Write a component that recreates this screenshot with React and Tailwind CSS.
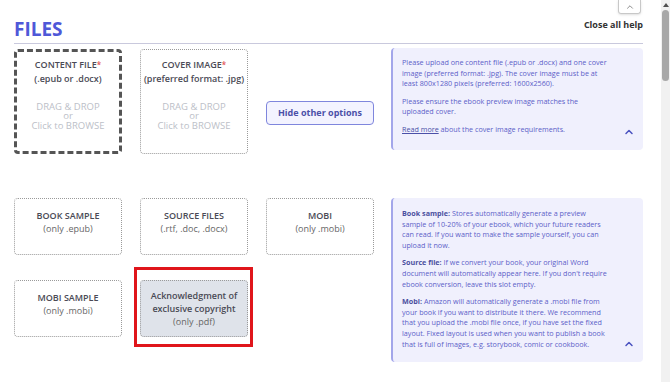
import { ChevronUp } from "lucide-react";

const font = { fontFamily: '"Open Sans", "DejaVu Sans", sans-serif' };

const UploadBox = ({ title, sub, required, drop, thick, filled, lines }) => (
  <div
    className={`w-[108px] flex flex-col items-center text-center rounded-[4px] ${
      thick ? "border-[3px] border-dashed border-[#555]" : "border border-dotted border-[#9a9a9a]"
    } ${filled ? "bg-[#dfe3ea]" : "bg-white"} ${drop ? "h-[105px]" : "h-[57px]"} ${
      thick ? "pt-[6px]" : drop ? "pt-[8px]" : lines ? "pt-[8px]" : "pt-[10px]"
    }`}
  >
    {lines ? (
      <div className="text-[9px] leading-[13px] font-semibold text-[#4a4a55]">
        {lines.map((l) => (
          <div key={l}>{l}</div>
        ))}
      </div>
    ) : (
      <div className="text-[9px] leading-[13px] font-semibold text-[#4a4a55]">
        {title}
        {required && <span className="text-[#e25555] align-top text-[8px]">*</span>}
      </div>
    )}
    <div className={`text-[9px] leading-[13px] ${drop ? "font-semibold text-[#4a4a55] mt-[1px]" : "text-[#666]"}`}>
      {sub}
    </div>
    {drop && (
      <div className="mt-[17px] text-[9.5px] leading-[9px] text-[#bcc0c8]">
        <div>DRAG &amp; DROP</div>
        <div>or</div>
        <div className="mt-[1px]">Click to BROWSE</div>
      </div>
    )}
  </div>
);

const HelpPanel = ({ className, children }) => (
  <div
    className={`w-[252px] ml-[17px] bg-[#f0f0fd] border-l-2 border-[#a3a6ea] rounded-[4px] pl-[9px] pr-[10px] relative text-[7.2px] leading-[10.6px] text-[#5c60c8] ${className}`}
  >
    {children}
    <ChevronUp className="absolute right-[8px] bottom-[12px] w-[12px] h-[12px] text-[#4a52c0]" strokeWidth={3} />
  </div>
);

export default function App() {
  return (
    <div className="flex w-[670px] h-[382px] bg-white overflow-hidden" style={font}>
      <div className="w-[661px] pl-[14px] pr-[18px]">
        <div className="flex justify-end pr-[2px]">
          <div className="w-[23px] h-[14px] border border-t-0 border-[#c8c8c8] rounded-b-[3px] shadow-sm flex items-center justify-center">
            <ChevronUp className="w-[10px] h-[10px] text-[#777]" strokeWidth={2} />
          </div>
        </div>
        <div className="h-[30px] flex justify-between items-end border-b border-[#c9c9dd]">
          <div className="text-[19px] leading-[22px] font-bold text-[#4f58d8] pb-[3px]">FILES</div>
          <div className="text-[9px] leading-[14px] font-bold text-[#333] pb-[11px]">Close all help</div>
        </div>

        <div className="flex mt-[4px]">
          <div className="flex gap-[18px] items-start pt-[1px]">
            <UploadBox title="CONTENT FILE" sub="(.epub or .docx)" required drop thick />
            <UploadBox title="COVER IMAGE" sub="(preferred format: .jpg)" required drop />
            <div className="w-[108px] h-[105px] flex items-center pt-[23px]">
              <button className="w-[108px] h-[24px] rounded-[4px] border-[1.5px] border-[#7f86dd] bg-[#f3f3ff] text-[9px] font-bold text-[#4b50a8]">
                Hide other options
              </button>
            </div>
          </div>
          <HelpPanel className="h-[102px] pt-[9px]">
            <p className="w-[208px]">
              Please upload one content file (.epub or .docx) and one cover image (preferred format: .jpg). The cover
              image must be at least 800x1280 pixels (preferred: 1600x2560).
            </p>
            <p className="w-[200px] mt-[7px]">Please ensure the ebook preview image matches the uploaded cover.</p>
            <p className="mt-[7px]">
              <span className="underline text-[#4b50a8]">Read more</span> about the cover image requirements.
            </p>
          </HelpPanel>
        </div>

        <div className="flex mt-[44px]">
          <div className="flex flex-col">
            <div className="flex gap-[18px]">
              <UploadBox title="BOOK SAMPLE" sub="(only .epub)" />
              <UploadBox title="SOURCE FILES" sub="(.rtf, .doc, .docx)" />
              <UploadBox title="MOBI" sub="(only .mobi)" />
            </div>
            <div className="flex gap-[18px] mt-[25px]">
              <UploadBox title="MOBI SAMPLE" sub="(only .mobi)" />
              <div className="relative">
                <div className="absolute left-[-6px] right-[-5px] top-[-13px] bottom-[-10px] border-[3px] border-[#e0151b]" />
                <UploadBox lines={["Acknowledgment of", "exclusive copyright"]} sub="(only .pdf)" filled />
              </div>
            </div>
          </div>
          <HelpPanel className="h-[164px] pt-[10px]">
            <p className="w-[203px]">
              <b className="text-[#4b4f9f]">Book sample:</b> Stores automatically generate a preview sample of 10-20% of
              your ebook, which your future readers can read. If you want to make the sample yourself, you can upload
              it now.
            </p>
            <p className="w-[206px] mt-[7px]">
              <b className="text-[#4b4f9f]">Source file:</b> If we convert your book, your original Word document will
              automatically appear here. If you don't require ebook conversion, leave this slot empty.
            </p>
            <p className="w-[206px] mt-[7px]">
              <b className="text-[#4b4f9f]">Mobi:</b> Amazon will automatically generate a .mobi file from your book if
              you want to distribute it there. We recommend that you upload the .mobi file once, if you have set the
              fixed layout. Fixed layout is used when you want to publish a book that is full of images, e.g.
              storybook, comic or cookbook.
            </p>
          </HelpPanel>
        </div>
      </div>

      <div className="w-[9px] h-[382px] bg-[#f1f1f1] flex flex-col items-center">
        <div className="mt-[3px] w-0 h-0 border-l-[3px] border-r-[3px] border-b-[4px] border-l-transparent border-r-transparent border-b-[#505050]" />
        <div className="mt-[3px] w-[7px] h-[71px] rounded-[4px] bg-[#a8a8a8]" />
      </div>
    </div>
  );
}
